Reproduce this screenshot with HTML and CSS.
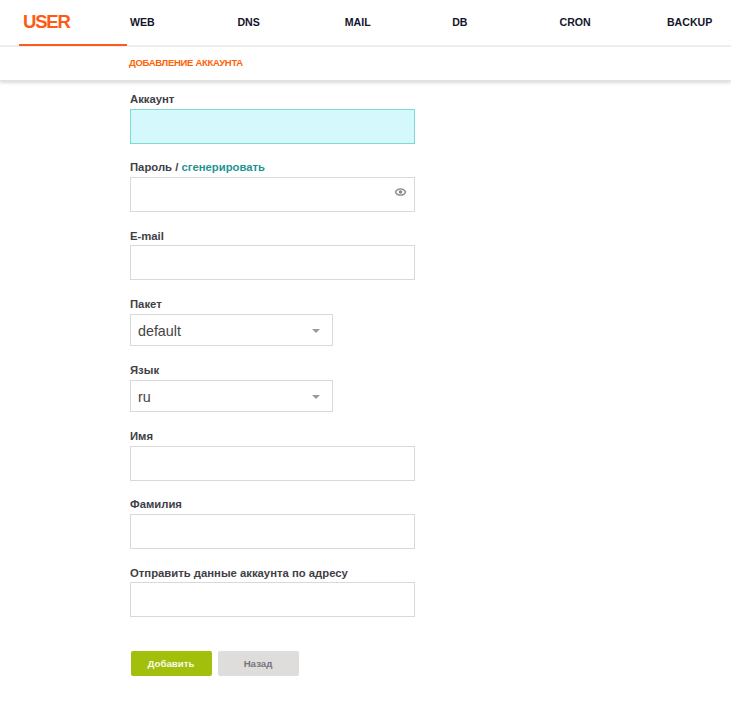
FILE: index.html
```html
<!DOCTYPE html>
<html lang="ru">
<head>
<meta charset="utf-8">
<title>Добавление аккаунта</title>
<link rel="stylesheet" href="styles.css">
</head>
<body>
<header class="topbar">
  <nav class="nav">
    <a class="nav-item nav-user">USER</a>
    <a class="nav-item">WEB</a>
    <a class="nav-item">DNS</a>
    <a class="nav-item">MAIL</a>
    <a class="nav-item">DB</a>
    <a class="nav-item">CRON</a>
    <a class="nav-item">BACKUP</a>
  </nav>
</header>
<div class="subbar"><span class="subtitle">ДОБАВЛЕНИЕ АККАУНТА</span></div>
<form class="form">
  <div class="field">
    <label class="label">Аккаунт</label>
    <div class="input input-active"></div>
  </div>
  <div class="field field-wide">
    <label class="label">Пароль / <a class="gen">сгенерировать</a></label>
    <div class="input input-pass">
      <svg class="eye" width="11" height="8" viewBox="0 0 12 8"><path d="M6 .5C3.5.5 1.4 2 .4 4c1 2 3.1 3.500 5.600 3.500S10.600 6 11.600 4C10.600 2 8.500.5 6 .5z" fill="none" stroke="#8a8a8a" stroke-width="1.400"/><circle cx="6" cy="4" r="2" fill="#8a8a8a"/></svg>
    </div>
  </div>
  <div class="field field-wide">
    <label class="label label-tight">E-mail</label>
    <div class="input"></div>
  </div>
  <div class="field field-select">
    <label class="label">Пакет</label>
    <div class="select"><span>default</span><i class="caret"></i></div>
  </div>
  <div class="field field-select">
    <label class="label">Язык</label>
    <div class="select"><span>ru</span><i class="caret"></i></div>
  </div>
  <div class="field">
    <label class="label">Имя</label>
    <div class="input"></div>
  </div>
  <div class="field field-wide">
    <label class="label">Фамилия</label>
    <div class="input"></div>
  </div>
  <div class="field">
    <label class="label label-tight">Отправить данные аккаунта по адресу</label>
    <div class="input"></div>
  </div>
  <div class="buttons">
    <button type="button" class="btn btn-add">Добавить</button>
    <button type="button" class="btn btn-back">Назад</button>
  </div>
</form>
</body>
</html>
```
FILE: styles.css
```css
* { box-sizing: border-box; }
html, body { margin: 0; padding: 0; background: #fff; }
body { font-family: "Liberation Sans", Arial, sans-serif; height: 701px; overflow: hidden; }
.topbar { height: 47px; border-bottom: 2px solid #eeeeee; }
.nav { display: grid; grid-template-columns: 108px repeat(5, 107.4px) 1fr; padding-left: 19px; height: 45px; }
.nav-item { font-size: 10.600px; font-weight: 700; color: #14142b; padding: 16px 0 0 3px; line-height: 13px; white-space: nowrap; }
.nav-user { font-size: 18.500px; letter-spacing: -1.2px; color: #ff5a14; padding: 12px 0 0 4px; line-height: 20px; border-bottom: 2px solid #ff5a1e; height: 46px; }
.subbar { height: 34px; border-bottom: 1px solid #e2e2e2; box-shadow: 0 2px 3px rgba(0,0,0,.14); padding: 10px 0 0 129px; }
.subtitle { display: block; font-size: 9.500px; letter-spacing: -0.3px; line-height: 12px; font-weight: 700; color: #ff6205; }
.form { padding: 11px 0 0 130px; }
.field { width: 285px; margin-bottom: 16px; }
.field-wide { margin-bottom: 17px; }
.field-select { margin-bottom: 17px; }
.label { display: block; font-size: 11.300px; line-height: 14px; font-weight: 700; color: #3f3f48; margin-bottom: 3px; }
.label-tight { margin-bottom: 2px; }
.gen { color: #1f9494; }
.input { height: 35px; border: 1px solid #d9d9d9; background: #fff; }
.input-active { background: #d5f8fc; border-color: #7fd9cf; }
.input-pass { display: flex; align-items: center; justify-content: flex-end; padding: 0 8px 5px 0; }
.eye { display: block; }
.select { width: 203px; height: 32px; border: 1px solid #d9d9d9; display: flex; align-items: center; justify-content: space-between; padding: 1px 12px 0 7px; font-size: 14.300px; color: #444; }
.caret { width: 0; height: 0; border-left: 4.500px solid transparent; border-right: 4.500px solid transparent; border-top: 4px solid #999; }
.buttons { display: flex; gap: 6px; padding: 18px 0 0 1px; }
.btn { width: 81px; height: 25px; border: 0; border-radius: 2px; font-family: inherit; font-size: 9.700px; font-weight: 700; padding: 0 1px 0 0; }
.btn-add { background: #a2bf0c; color: #f8fbe8; }
.btn-back { background: #dedddc; color: #77757a; }
```
